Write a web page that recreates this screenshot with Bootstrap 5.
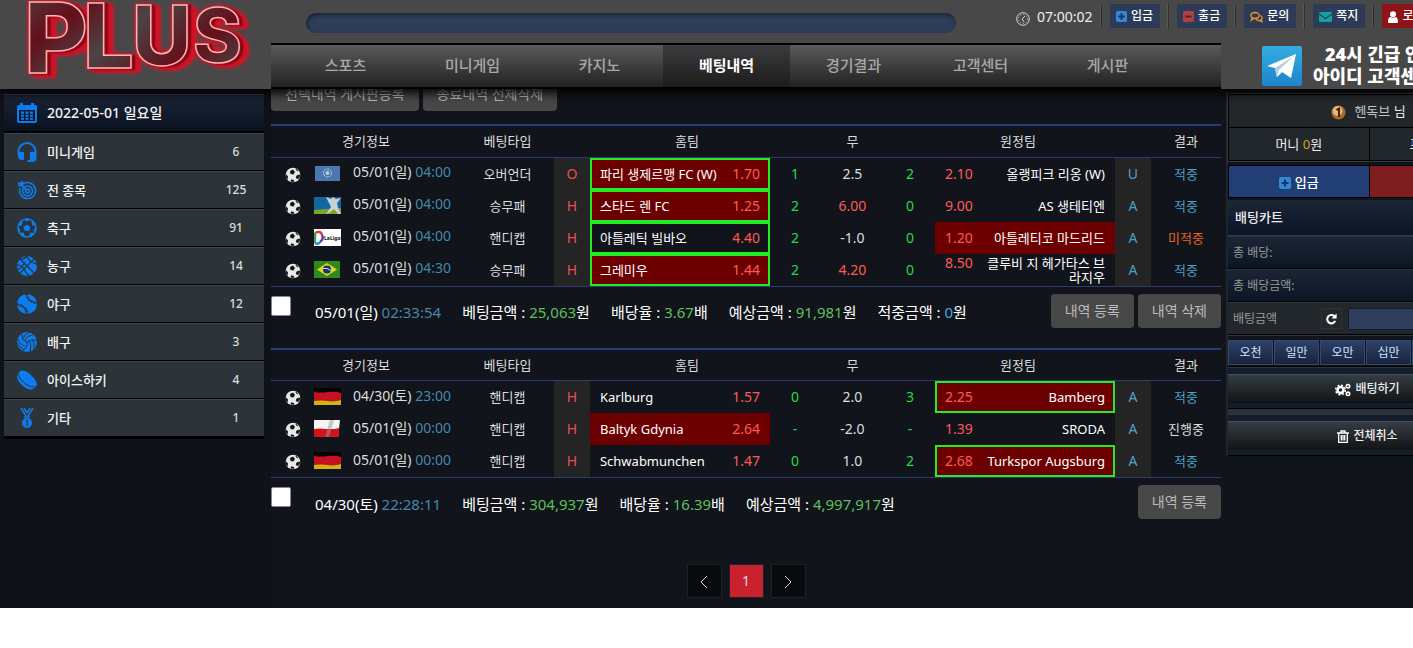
<!DOCTYPE html>
<html lang="ko">
<head>
<meta charset="utf-8">
<meta name="viewport" content="width=device-width, initial-scale=1">
<title>PLUS - 베팅내역</title>
<link href="https://cdn.jsdelivr.net/npm/bootstrap@5.3.0/dist/css/bootstrap.min.css" rel="stylesheet">
<style>
body{font-family:"Noto Sans","Noto Sans CJK KR",sans-serif;font-size:13px;line-height:18px;background:#fff;color:#eee;overflow-x:hidden}
a{text-decoration:none;color:inherit}
.page-bg{background:#11141b;overflow-x:clip}
.shell{display:grid;grid-template-columns:271px minmax(950px,1fr) 290px}
.site-head{position:relative;z-index:2;background:#484849;box-shadow:0 4px 10px #000}
.head-main{grid-column:2 / 4}
.logo{filter:drop-shadow(0 0 1px #f01428) drop-shadow(3px 1px 0 #7c0814) drop-shadow(5px 2px 0 #d01226) drop-shadow(0 0 2px #e01428)}
.top-line{height:43px}
.notice{width:650px;height:20px;margin:13px 60px 0 35px;border-radius:10px;background:#2e3d5a;box-shadow:inset 1px 2px 4px #1a2232;border:0}
.clock{font-size:14px;width:85px;margin-top:8px}
.clock svg{margin:3px 7px 0 0}
.quick{margin-top:4px}
.quick li{border-left:1px solid #303031;box-shadow:-1px 0 #555;padding:0 8px}
.quick button{height:24px;padding:0 7px 0 6px;background:#2e3b58;border:0;color:#fff;font-size:12px;line-height:24px;font-weight:500}
.quick button.out{background:#8d1518}
.main-nav{width:950px;height:46px;border:solid #000;border-width:2px 0;background:linear-gradient(#5a5a5c,#222);padding:0 50px 0 11px}
.main-nav a{flex:1;text-align:center;font-size:15px;line-height:40px;color:#a9a9aa;font-weight:500;height:42px}
.main-nav a.active{background:linear-gradient(#3c3c3e,#1c1c1c);color:#fff;font-weight:700}
.banner{width:290px}
.banner svg{margin:3px 11px 0 41px}
.tele{font-size:18px;line-height:22px;font-weight:900;color:#fff;white-space:nowrap;text-align:center}
.side{padding:5px 7px 0 4px;background:#101219}
.side-date{height:38px;background:linear-gradient(#1b2436,#0a1220);border-top:1px solid #333c46;font-size:14px}
.side a,.side-date{padding:0 13px 1px;display:flex;align-items:center;font-weight:500;color:#f2f2f2}
.side a{height:38px;background:#2c3439;border-bottom:1px solid #000;border-top:1px solid #3b444a}
.side .ico{width:20px;height:20px;margin-right:10px;color:#0c7df0}
.side .cnt{margin-left:auto;width:30px;text-align:center;color:#ddd;font-size:12px}
.side ul{border:solid #000;border-width:2px 0;margin:-1px 0 0}
.gbtn{height:34px;padding:0 14px;border:0;border-radius:4px;background:#484849;color:#bcbcbc;font-size:14px;line-height:34px}
.tools{margin:-12px 0 13px}
.bets{table-layout:fixed;width:100%;border-top:2px solid #2d3b6e;border-bottom:1px solid #2d3b6e;text-align:center}
.bets thead th{height:32px;padding:0;font-weight:400;border-bottom:1px solid #2d3b6e;color:#ddd}
.bets td{height:32px;padding:0;color:#ddd}
.bets .num{font-size:14px}
.bets .kind{background:#242424;font-size:14px}
.team{display:flex;justify-content:space-between;align-items:center;height:32px;padding:0 10px;color:#fff;line-height:14px}
.team .odd{font-size:14px}
.team.pick{background:#6c0000}
.team.win{border:2px solid #22ec22;padding:0 8px}
.team.two{text-align:right;align-items:flex-start;padding-top:2px}
.odd{color:#ff5a55}.draw{color:#ff5a55!important}
.grn{color:#21dd45!important}.blu{color:#4aa3c8!important}.red{color:#e8504e!important}.org{color:#e8641d!important}
.when{font-size:14px;text-align:left;padding-bottom:2px!important}
.when svg{margin-right:12px}
.when time,.sum time{color:#4687ac}
.sum{margin:7px 0 20px;min-height:34px;font-size:15px;color:#fff}
.sum .form-check-input{width:20px;height:20px;margin:2px 24px 0 0;border-radius:2px;border-color:#888;align-self:flex-start}
.sum b{font-weight:400;color:#5cc15c}.sum b.z{color:#4aa8dc}
.info{padding-top:3px;column-gap:21px}
.pager{margin-top:45px;padding-bottom:10px;gap:7px}
.pager a{width:35px;height:34px;border:1px solid #1e2127;background:#090a0d;line-height:32px;text-align:center;color:#ddd;font-size:14px}
.pager a.on{background:#c9212d}
.cart{margin:5px 2px 0 5px;border-left:2px solid #20252c;padding-top:0}
.user{border:1px solid #000;background:#22272c;outline:1px solid #343a42}
.cell{height:32px;line-height:32px;text-align:center}
.nick{color:#c4c4c4}
.gold{color:#d9a21b}
.mon{border-top:1px solid #000}
.mon .cell+.cell,.cash button+button{border-left:1px solid #000}
.cash{margin-top:4px;border:1px solid #000}
.cash button{border:0;height:31px;background:#213f74;color:#fff;font-weight:500}
.cash button.wd{background:#7f1e1e}
.cart h2{font-size:13px;font-weight:500;line-height:34px;height:36px;margin:2px 0 0;padding-left:7px;background:linear-gradient(#1c2636,#0b1526);border-bottom:1px solid #343a42;color:#eee}
.ln{height:33px;display:flex;align-items:center;padding:0 5px;font-size:12px;color:#999;background:linear-gradient(#1b2534,#0c1525);border-top:1px solid #2d3640;border-bottom:1px solid #000}
.ln.amt{background:#22272c}
.ln.amt input{width:156px;height:22px;background:#2e3d5a;border:1px solid #111c2c;border-radius:2px;margin-left:6px;color:#fff}
.ln.amt button{width:21px;height:21px;padding:3px;border:1px solid #2c3238;background:#22272c;color:#fff;display:flex}
.chips{padding:4px 0 1px;gap:1px;border-top:1px solid #2d3640;border-bottom:1px solid #000}
.chips button{width:45px;height:25px;padding:0;border:1px solid #36486b;background:linear-gradient(#2d4067,#17243d);color:#cfe0ff;font-size:12px}
.act{padding:6px 2px 5px 0;border-top:1px solid #2d3640;border-bottom:1px solid #000;background:#131d2b}
.act button{width:100%;height:29px;border:0;border-top:1px solid #46515a;background:linear-gradient(#343d44,#121314);color:#eee;font-size:12px;font-weight:500}
.sep{height:5px;background:#2b3137}
</style>
</head>
<body>
<svg width="0" height="0" class="d-none" aria-hidden="true">
<defs>
<symbol id="ball" viewBox="0 0 16 16"><circle cx="8" cy="8" r="7.3" fill="#e8e8e8"/><path d="M5 4l3-1.500L10 5 8.500 7.500 5.500 7zM11.500 8.500l3-1 .6 1-1 3-2.200.5L10.800 10.500zM1 7.500l1.800 1.500.2 2.500-.8.5C1 11 .7 9 1 7.500zM6 12.500l2.500.2 1 1.700-1.500.7-2.500-.8zM11 1.500l2.500 2.500-1.200.3-1.800-1.800z" fill="#151515"/></symbol>
<symbol id="plus" viewBox="0 0 12 12"><rect width="12" height="12" rx="2" fill="#3487d6"/><path d="M6 2.500v7M2.500 6h7" stroke="#17335e" stroke-width="2"/></symbol>
<symbol id="de" viewBox="0 0 27 17"><path fill="#0a0000" d="M0 0h27v5H0z"/><path fill="#c51220" d="M0 4q7 1 14 0t13 1v8H0z"/><path fill="#d3b414" d="M0 13q7-1 14 0t13-1v5H0z"/></symbol>
</defs>
</svg>

<div class="page-bg">
<header class="site-head shell">
  <a href="#" aria-label="PLUS">
    <svg width="271" height="89" viewBox="0 0 271 89" class="d-block">
      <defs><linearGradient id="rg" gradientUnits="userSpaceOnUse" x1="0" y1="0" x2="60" y2="80" spreadMethod="repeat"><stop offset="0" stop-color="#4b4344"/><stop offset=".55" stop-color="#64101a"/><stop offset="1" stop-color="#4b4344"/></linearGradient></defs>
      <g class="logo" font-family="Inter" font-weight="800" fill="url(#rg)" stroke="#ffb4b4" stroke-width="1.500"><text y="73"><tspan x="24" font-size="98">P</tspan><tspan x="83" y="68" font-size="90">L</tspan><tspan x="132" y="65" font-size="82">U</tspan><tspan x="193" y="62" font-size="74">S</tspan></text></g>
    </svg>
  </a>
  <div class="head-main">
    <div class="top-line d-flex align-items-start">
      <div class="notice flex-shrink-0"></div>
      <div class="clock d-flex align-items-center flex-shrink-0"><svg width="14" height="14" viewBox="0 0 14 14" class="flex-shrink-0" fill="none" stroke="#d8d8d8"><circle cx="7" cy="7" r="6.300"/><circle cx="7" cy="7" r="4.500" stroke-dasharray="1 2"/><path d="M9 4L6 7l2 3"/></svg>07:00:02</div>
      <ul class="quick d-flex list-unstyled mb-0 text-nowrap">
        <li><button type="button"><svg width="11" height="11" class="me-1"><use href="#plus"/></svg>입금</button></li>
        <li><button type="button"><svg width="11" height="11" viewBox="0 0 12 12" class="me-1"><rect width="12" height="12" rx="2" fill="#b04040"/><path d="M2.500 6h7" stroke="#4a2233" stroke-width="2"/></svg>출금</button></li>
        <li><button type="button"><svg width="13" height="12" viewBox="0 0 13 12" class="me-1" fill="none" stroke="#e79a2a" stroke-width="1.300"><ellipse cx="5" cy="4.500" rx="4.200" ry="3"/><path d="M2.500 7L1.500 9 4 7.500M10.500 4.500c2.300 1.200 2 3.500.5 4.300l1 1.900-3-1.300c-1.500.1-2.500-.3-3.200-1"/></svg>문의</button></li>
        <li><button type="button"><svg width="13" height="10" viewBox="0 0 13 10" class="me-1"><rect width="13" height="10" rx="1" fill="#12a3a0"/><path d="M0 2l6.500 4.500L13 2" fill="none" stroke="#2e3b58" stroke-width="1.200"/></svg>쪽지</button></li>
        <li><button type="button" class="out"><svg width="10" height="12" viewBox="0 0 10 12" class="me-1" fill="#fff"><circle cx="5" cy="3.200" r="3"/><path d="M0 11c0-4 1.500-5 2.500-5 1.500 1 3.500 1 5 0 1 0 2.500 1 2.500 5q0 1-1 1H1q-1 0-1-1"/></svg>로그아웃</button></li>
      </ul>
    </div>
    <div class="d-flex">
      <nav class="main-nav d-flex flex-grow-1">
        <a href="#">스포츠</a><a href="#">미니게임</a><a href="#">카지노</a><a href="#" class="active">베팅내역</a><a href="#">경기결과</a><a href="#">고객센터</a><a href="#">게시판</a>
      </nav>
      <a href="#" class="banner d-flex align-items-start flex-shrink-0">
        <svg width="40" height="40" viewBox="0 0 40 40" class="flex-shrink-0"><defs><linearGradient id="tg" x2="0" y2="1"><stop stop-color="#35ade1"/><stop offset="1" stop-color="#1c84cd"/></linearGradient></defs><rect width="40" height="40" rx="2" fill="url(#tg)"/><path d="M5 20L34 8l-5 24-9-6-5 5-2-9z" fill="#fff"/><path d="M13 22l19-12-15 14-2 7z" fill="#b8cddd"/></svg>
        <span class="tele">24시 긴급 안<br>아이디 고객센터</span>
      </a>
    </div>
  </div>
</header>

<div class="shell">
  <aside class="side">
    <div class="side-date"><svg class="ico" viewBox="0 0 20 20"><path fill="currentColor" fill-rule="evenodd" d="M3 0h3v2h8V0h3v2h1.500Q20 2 20 4v14q0 2-2 2H2q-2 0-2-2V4q0-2 2-2h1zM2 7v11h16V7zM4 8.500h3v2.200H4zm4.500 0h3v2.200h-3zm4.500 0h3v2.200h-3zM4 11.700h3v2H4zm4.500 0h3v2h-3zm4.500 0h3v2h-3zM4 14.700h3v2H4zm4.500 0h3v2h-3zm4.500 0h3v2h-3z"/></svg>2022-05-01 일요일</div>
    <ul class="list-unstyled">
      <li><a href="#"><svg class="ico" viewBox="0 0 20 20"><path d="M1.500 13V9.500a8.500 8.500 0 0 1 17 0V16q0 3-4 3h-4" fill="none" stroke="currentColor" stroke-width="2"/><path fill="currentColor" d="M1 10h6v8H4q-3-1-3-3zM13 10h6v5q0 2-3 3h-3z"/></svg>미니게임<span class="cnt">6</span></a></li>
      <li><a href="#"><svg class="ico" viewBox="0 0 20 20" fill="none" stroke="currentColor" stroke-width="1.600"><path d="M6 4a8 8 0 1 1-3 4"/><circle cx="10.500" cy="11" r="5"/><circle cx="10.500" cy="11" r="2"/><path d="M10 11L3 3M1 3l3 1 1-3M1 5l4 1 1-4"/></svg>전 종목<span class="cnt">125</span></a></li>
      <li><a href="#"><svg class="ico" viewBox="0 0 20 20"><circle cx="10" cy="10" r="9" fill="none" stroke="currentColor" stroke-width="1.500"/><path fill="currentColor" d="M10 6.500l3.500 2.600-1.300 4H7.800l-1.300-4zM6 1.500L10 3.500l4-2-4-1.200zM18.800 7l-3 1-1.500-3.500 1.500-1.500zM1.200 7l3 1 1.500-3.500L4.200 3zM3 15l4-.5.500 4.500-2-.7zM17 15l-4-.5-.5 4.500 2-.7zM1 10l2 1 0 4-2-2zM19 10l-2 1v4l2-2z"/></svg>축구<span class="cnt">91</span></a></li>
      <li><a href="#"><svg class="ico" viewBox="0 0 20 20"><circle cx="10" cy="10" r="10" fill="currentColor"/><path d="M3 3l14 14M17 3L3 17M10 0q-4 4-7.500 3.500M10 0q1 5 7 7t3 3M0 9q5 0 7 4t5 7M0 14q5-2 8-8" fill="none" stroke="#2c3439" stroke-width="1.200"/></svg>농구<span class="cnt">14</span></a></li>
      <li><a href="#"><svg class="ico" viewBox="0 0 20 20"><circle cx="10" cy="10" r="10" fill="currentColor"/><path d="M9.500 0q1 8 10.500 9M0 10.500q9 1 10.500 9.500" fill="none" stroke="#2c3439" stroke-width="1.200"/><path d="M9.500 0q1 8 10.500 9M0 10.500q9 1 10.500 9.500" fill="none" stroke="#2c3439" stroke-width="3" stroke-dasharray="1 2"/></svg>야구<span class="cnt">12</span></a></li>
      <li><a href="#"><svg class="ico" viewBox="0 0 20 20"><circle cx="10" cy="10" r="10" fill="currentColor"/><path d="M10 10Q5 9 5 2M10 10q5-4 10-1M10 10q1 6-5 9M7.500 9Q9 4 16 3M5 8Q8 1 13 0M12 8.500q3 4 1 11M15 7.500q3 4 2 9M8 14Q3 13 1 7M6.500 17Q2 15 0 11" fill="none" stroke="#2c3439"/></svg>배구<span class="cnt">3</span></a></li>
      <li><a href="#"><svg class="ico" viewBox="0 0 20 20"><path fill="currentColor" d="M3 1q5-2 11 4t6 10l-4 4q-4 2-10-3T0 6z"/><path d="M1.500 4.500Q2 9 8 13.500t9 3" fill="none" stroke="#2c3439"/></svg>아이스하키<span class="cnt">4</span></a></li>
      <li><a href="#"><svg class="ico" viewBox="0 0 20 20"><circle cx="10" cy="15" r="5" fill="currentColor"/><path d="M4 0l5 8M7 0l3 5M16 0l-5 8M13 0l-3 5M7 9h6" fill="none" stroke="currentColor" stroke-width="1.500"/><path d="M9 13.500l1.300-1V18" fill="none" stroke="#2c3439" stroke-width="1.300"/></svg>기타<span class="cnt">1</span></a></li>
    </ul>
  </aside>

  <main>
    <div class="tools d-flex gap-1"><button type="button" class="gbtn">선택내역 게시판등록</button><button type="button" class="gbtn">종료내역 전체삭제</button></div>

    <table class="bets">
      <colgroup><col style="width:43px"><col><col style="width:93px"><col style="width:36px"><col style="width:180px"><col style="width:50px"><col style="width:65px"><col style="width:50px"><col style="width:180px"><col style="width:36px"><col style="width:70px"></colgroup>
      <thead><tr><th colspan="2">경기정보</th><th>베팅타입</th><th colspan="3">홈팀</th><th>무</th><th colspan="3">원정팀</th><th>결과</th></tr></thead>
      <tbody>
      <tr><td><svg width="16" height="16"><use href="#ball"/></svg></td><td class="when"><svg width="27" height="17" viewBox="0 0 27 17"><path fill="#4b78ae" d="M1 1h25v15H1z"/><circle cx="13.500" cy="8" r="4" fill="none" stroke="#d5e0ee" stroke-dasharray="2 1"/><circle cx="13.500" cy="8" r="2" fill="#b8cce2"/></svg>05/01(일) <time>04:00</time></td><td>오버언더</td><td class="kind red">O</td><td><div class="team pick win"><span>파리 생제르맹 FC (W)</span><span class="odd">1.70</span></div></td><td class="num grn">1</td><td class="num">2.5</td><td class="num grn">2</td><td><div class="team"><span class="odd">2.10</span><span>올랭피크 리옹 (W)</span></div></td><td class="kind blu">U</td><td class="blu">적중</td></tr>
      <tr><td><svg width="16" height="16"><use href="#ball"/></svg></td><td class="when"><svg width="27" height="17" viewBox="0 0 27 17"><path fill="#12679f" d="M0 0h27v17H0z"/><path fill="#7da52c" d="M0 13l27-2v6H0z"/><path fill="#c9d0d3" d="M12 0l5 2 2-2 3 2 5-1-4 5 1 5 3 6h-3l-4-5-5 4-3 1 5-7z"/></svg>05/01(일) <time>04:00</time></td><td>승무패</td><td class="kind red">H</td><td><div class="team pick win"><span>스타드 렌 FC</span><span class="odd">1.25</span></div></td><td class="num grn">2</td><td class="num draw">6.00</td><td class="num grn">0</td><td><div class="team"><span class="odd">9.00</span><span>AS 생테티엔</span></div></td><td class="kind blu">A</td><td class="blu">적중</td></tr>
      <tr><td><svg width="16" height="16"><use href="#ball"/></svg></td><td class="when"><svg width="27" height="17" viewBox="0 0 27 17"><path fill="#fff" d="M0 0h27v17H0z"/><g fill="none" stroke-width="2.500"><path d="M1 4q6-3 7 2" stroke="#e4392e"/><path d="M8 6q2 4-2 7" stroke="#6b3aa0"/><path d="M6 13q-2 3-5 1" stroke="#1f8fe0"/><path d="M1 4v10" stroke="#3aa84a"/></g><text x="10" y="11" font-size="5" font-weight="800" fill="#222">LaLiga</text></svg>05/01(일) <time>04:00</time></td><td>핸디캡</td><td class="kind red">H</td><td><div class="team win"><span>아틀레틱 빌바오</span><span class="odd">4.40</span></div></td><td class="num grn">2</td><td class="num">-1.0</td><td class="num grn">0</td><td><div class="team pick"><span class="odd">1.20</span><span>아틀레티코 마드리드</span></div></td><td class="kind blu">A</td><td class="org">미적중</td></tr>
      <tr><td><svg width="16" height="16"><use href="#ball"/></svg></td><td class="when"><svg width="27" height="17" viewBox="0 0 27 17"><path fill="#2f8a1b" d="M0 0h26v17H0z"/><path fill="#e3d51c" d="M13 2l10 6.500L13 15 3 8.500z"/><circle cx="13" cy="8.500" r="4" fill="#1b2f7c"/><path d="M9 7.500q4-1 8 2" stroke="#cdd" fill="none"/></svg>05/01(일) <time>04:30</time></td><td>승무패</td><td class="kind red">H</td><td><div class="team pick win"><span>그레미우</span><span class="odd">1.44</span></div></td><td class="num grn">2</td><td class="num draw">4.20</td><td class="num grn">0</td><td><div class="team two"><span class="odd">8.50</span><span>클루비 지 헤가타스 브<br>라지우</span></div></td><td class="kind blu">A</td><td class="blu">적중</td></tr>
      </tbody>
    </table>
    <div class="sum d-flex align-items-center">
      <input class="form-check-input flex-shrink-0" type="checkbox" aria-label="05/01 02:33:54 내역 선택">
      <div class="info d-flex flex-grow-1"><span>05/01(일) <time>02:33:54</time></span><span>베팅금액 : <b>25,063</b>원</span><span>배당율 : <b>3.67</b>배</span><span>예상금액 : <b>91,981</b>원</span><span>적중금액 : <b class="z">0</b>원</span></div>
      <div class="d-flex gap-1"><button type="button" class="gbtn">내역 등록</button><button type="button" class="gbtn">내역 삭제</button></div>
    </div>

    <table class="bets">
      <colgroup><col style="width:43px"><col><col style="width:93px"><col style="width:36px"><col style="width:180px"><col style="width:50px"><col style="width:65px"><col style="width:50px"><col style="width:180px"><col style="width:36px"><col style="width:70px"></colgroup>
      <thead><tr><th colspan="2">경기정보</th><th>베팅타입</th><th colspan="3">홈팀</th><th>무</th><th colspan="3">원정팀</th><th>결과</th></tr></thead>
      <tbody>
      <tr><td><svg width="16" height="16"><use href="#ball"/></svg></td><td class="when"><svg width="27" height="17"><use href="#de"/></svg>04/30(토) <time>23:00</time></td><td>핸디캡</td><td class="kind red">H</td><td><div class="team"><span>Karlburg</span><span class="odd">1.57</span></div></td><td class="num grn">0</td><td class="num">2.0</td><td class="num grn">3</td><td><div class="team pick win"><span class="odd">2.25</span><span>Bamberg</span></div></td><td class="kind blu">A</td><td class="blu">적중</td></tr>
      <tr><td><svg width="16" height="16"><use href="#ball"/></svg></td><td class="when"><svg width="27" height="17" viewBox="0 0 27 17"><path fill="#f4f4f4" d="M0 0h26l-1 9H0z"/><path fill="#d1151d" d="M0 9q6-1 12 0t13-1v9H0z"/><path fill="#999" opacity=".5" d="M16 0h4l-5 17h-4z"/></svg>05/01(일) <time>00:00</time></td><td>핸디캡</td><td class="kind red">H</td><td><div class="team pick"><span>Baltyk Gdynia</span><span class="odd">2.64</span></div></td><td class="num grn">-</td><td class="num">-2.0</td><td class="num grn">-</td><td><div class="team"><span class="odd">1.39</span><span>SRODA</span></div></td><td class="kind blu">A</td><td>진행중</td></tr>
      <tr><td><svg width="16" height="16"><use href="#ball"/></svg></td><td class="when"><svg width="27" height="17"><use href="#de"/></svg>05/01(일) <time>00:00</time></td><td>핸디캡</td><td class="kind red">H</td><td><div class="team"><span>Schwabmunchen</span><span class="odd">1.47</span></div></td><td class="num grn">0</td><td class="num">1.0</td><td class="num grn">2</td><td><div class="team pick win"><span class="odd">2.68</span><span>Turkspor Augsburg</span></div></td><td class="kind blu">A</td><td class="blu">적중</td></tr>
      </tbody>
    </table>
    <div class="sum d-flex align-items-center mb-0">
      <input class="form-check-input flex-shrink-0" type="checkbox" aria-label="04/30 22:28:11 내역 선택">
      <div class="info d-flex flex-grow-1"><span>04/30(토) <time>22:28:11</time></span><span>베팅금액 : <b>304,937</b>원</span><span>배당율 : <b>16.39</b>배</span><span>예상금액 : <b>4,997,917</b>원</span></div>
      <button type="button" class="gbtn">내역 등록</button>
    </div>
    <nav class="pager d-flex justify-content-center" aria-label="페이지">
      <a href="#" aria-label="이전"><svg width="8" height="14" viewBox="0 0 8 14" fill="none" stroke="#ddd"><path d="M7 1L1 7l6 6"/></svg></a>
      <a href="#" class="on">1</a>
      <a href="#" aria-label="다음"><svg width="8" height="14" viewBox="0 0 8 14" fill="none" stroke="#ddd"><path d="M1 1l6 6-6 6"/></svg></a>
    </nav>
  </main>

  <aside>
    <div class="cart">
      <div class="user">
        <div class="cell"><svg width="15" height="15" viewBox="0 0 15 15" class="me-2"><circle cx="7.500" cy="7.500" r="7" fill="#a8692a"/><circle cx="6.500" cy="6" r="5" fill="#e3b676"/><path d="M5.500 5l2.500-1.500V12" stroke="#2b1704" stroke-width="1.800" fill="none"/></svg><span class="nick">헨독브</span> 님</div>
        <div class="mon row g-0"><div class="cell col-6">머니 <span class="gold">0</span>원</div><div class="cell col-6">포인트 <span class="gold">0</span>원</div></div>
      </div>
      <div class="cash d-flex"><button type="button" class="w-50"><svg width="12" height="12" class="me-1"><use href="#plus"/></svg>입금</button><button type="button" class="wd w-50">출금</button></div>
      <h2>배팅카트</h2>
      <div class="ln">총 배당:</div>
      <div class="ln">총 배당금액:</div>
      <div class="ln amt"><label for="amount" class="me-auto">배팅금액</label><button type="button" aria-label="초기화"><svg width="14" height="14" viewBox="0 0 14 14"><path d="M10.500 4.500A4.500 4.500 0 1 0 11 9" fill="none" stroke="#fff" stroke-width="2.200"/><path d="M12.500 1v5.500H7z" fill="#fff"/></svg></button><input id="amount" type="text"></div>
      <div class="chips d-flex"><button type="button">오천</button><button type="button">일만</button><button type="button">오만</button><button type="button">십만</button><button type="button">오십만</button><button type="button">백만</button></div>
      <div class="act"><button type="button"><svg width="16" height="14" viewBox="0 0 16 14" class="me-1" fill="none" stroke="#fff"><circle cx="5.500" cy="7" r="3" stroke-width="2.500"/><circle cx="5.500" cy="7" r="4.800" stroke-width="1.500" stroke-dasharray="2 1.770"/><circle cx="13" cy="3.200" r="1.700" stroke-width="1.600"/><circle cx="13" cy="10.800" r="1.700" stroke-width="1.600"/></svg>배팅하기</button></div>
      <div class="sep"></div>
      <div class="act"><button type="button"><svg width="12" height="13" viewBox="0 0 12 13" class="me-1" fill="none" stroke="#fff" stroke-width="1.300"><path d="M0 3h12M4 3V1h4v2M1.700 3v9.300h8.600V3M4.300 5v5.500M6 5v5.500M7.700 5v5.500"/></svg>전체취소</button></div>
    </div>
  </aside>
</div>
</div>
<script src="https://cdn.jsdelivr.net/npm/bootstrap@5.3.0/dist/js/bootstrap.bundle.min.js"></script>
</body>
</html>
